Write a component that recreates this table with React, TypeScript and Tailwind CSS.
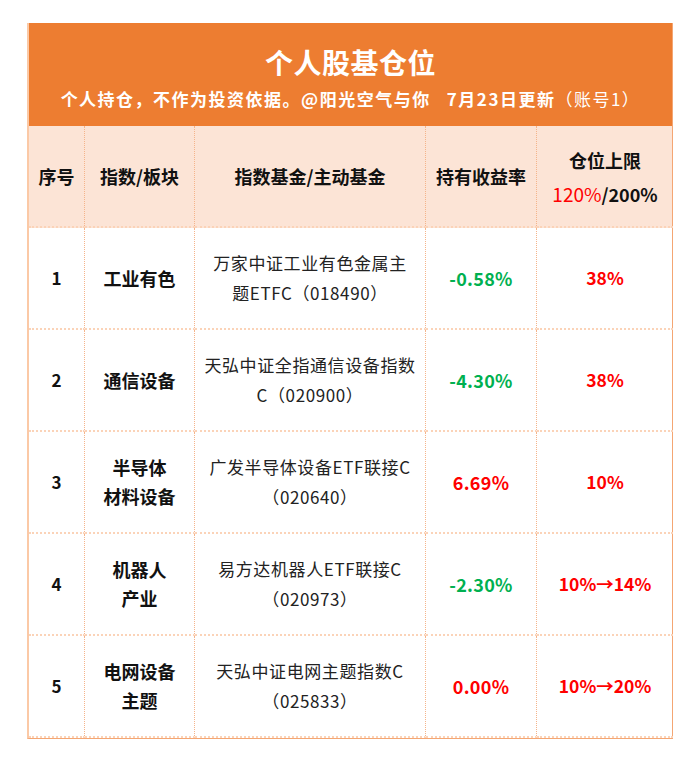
const rows = [
    { no: '1', sector: ['工业有色'], fund: ['万家中证工业有色金属主', '题ETFC（018490）'], ret: '-0.58%', up: false, cap: '38%' },
    { no: '2', sector: ['通信设备'], fund: ['天弘中证全指通信设备指数', 'C（020900）'], ret: '-4.30%', up: false, cap: '38%' },
    { no: '3', sector: ['半导体', '材料设备'], fund: ['广发半导体设备ETF联接C', '（020640）'], ret: '6.69%', up: true, cap: '10%' },
    { no: '4', sector: ['机器人', '产业'], fund: ['易方达机器人ETF联接C', '（020973）'], ret: '-2.30%', up: false, cap: '10%→14%' },
    { no: '5', sector: ['电网设备', '主题'], fund: ['天弘中证电网主题指数C', '（025833）'], ret: '0.00%', up: true, cap: '10%→20%' },
];

const cell = 'flex flex-col items-center justify-center text-center border-b-2 border-r border-dotted border-b-[#fbd3b8] border-r-[#f5b48a]';

const App = () => {
    return (
        <div className="w-[700px] h-[778px] bg-white pt-[23px] pl-[27px]" style={{ fontFamily: '"Noto Sans CJK SC", "Noto Sans", sans-serif' }}>
            <div className="w-[646px] border-l-2 border-l-[#fbc9a6] border-r border-r-[#f4a673] border-b border-b-[#f4a673]">
                <div className="h-[103px] bg-[#ed7d31] flex flex-col items-center text-white font-bold">
                    <h1 className="text-[28px] leading-none mt-[25px] tracking-[0.5px]">个人股基仓位</h1>
                    <p className="text-[17px] leading-none mt-[14px] tracking-[1.5px]">
                        个人持仓，不作为投资依据。@阳光空气与你&nbsp;&nbsp;&nbsp;7月23日更新<span className="font-normal">（账号1）</span>
                    </p>
                </div>

                <div className="grid grid-cols-[56px_110px_231px_111px_136px] bg-[#fce4d6] h-[102px] font-bold text-[18px] text-[#111]">
                    <div className={cell}>序号</div>
                    <div className={cell}>指数/板块</div>
                    <div className={cell}>指数基金/主动基金</div>
                    <div className={cell}>持有收益率</div>
                    <div className={cell + ' border-r-0 leading-[33px] pt-[2px]'}>
                        <span>仓位上限</span>
                        <span><span className="text-[#ff0000] font-normal text-[19px]">120%</span><span className="font-semibold">/200%</span></span>
                    </div>
                </div>

                {rows.map((r, i) => (
                    <div key={r.no} className="grid grid-cols-[56px_110px_231px_111px_136px] h-[102px] bg-white">
                        <div className={cell + ' font-bold text-[17px] text-[#111]' + (i === 4 ? ' border-b-0' : '')}>{r.no}</div>
                        <div className={cell + ' font-bold text-[18px] text-[#111] leading-[29px]' + (i === 4 ? ' border-b-0' : '')}>
                            {r.sector.map((s) => <span key={s}>{s}</span>)}
                        </div>
                        <div className={cell + ' text-[17px] text-[#222] leading-[30px] tracking-[0.6px]' + (i === 4 ? ' border-b-0' : '')}>
                            {r.fund.map((f) => <span key={f}>{f}</span>)}
                        </div>
                        <div className={cell + ' font-bold text-[18px] tracking-[0.3px]' + (r.up ? ' text-[#ff0000]' : ' text-[#00b050]') + (i === 4 ? ' border-b-0' : '')}>{r.ret}</div>
                        <div className={cell + ' border-r-0 font-bold text-[17.5px] text-[#ff0000]' + (i === 4 ? ' border-b-0' : '')}>{r.cap}</div>
                    </div>
                ))}
            </div>
        </div>
    );
};

export default App;
